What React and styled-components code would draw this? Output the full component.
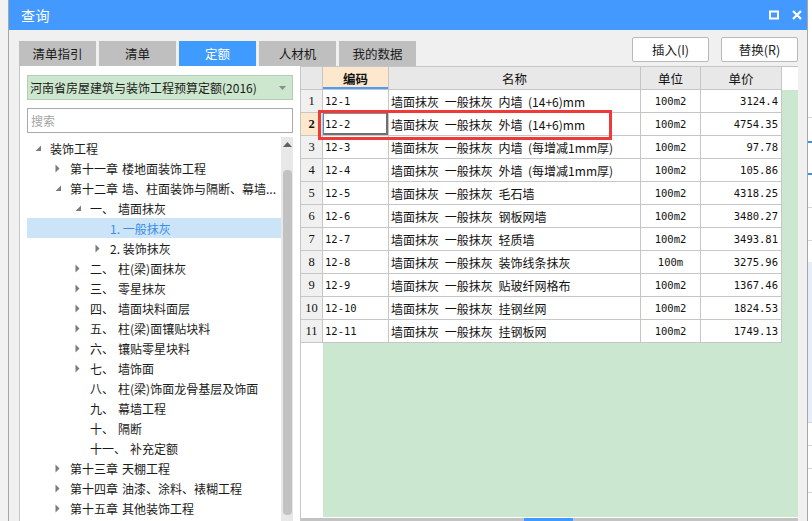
import React from 'react';
import styled, { createGlobalStyle } from 'styled-components';

const Global = createGlobalStyle`
  html, body { margin: 0; padding: 0; }
  body {
    width: 812px; height: 521px; overflow: hidden; background: #f2f2f2;
    font-family: "Noto Sans CJK SC", "Noto Sans", sans-serif; font-size: 12px; color: #1e1e1e;
  }
  * { box-sizing: border-box; }
`;

const Page = styled.div`
  display: flex; width: 812px; height: 521px; overflow: hidden;
`;
const Gutter = styled.div`
  width: 8px; flex: none; background: #f2f2f2;
`;
const Backdrop = styled.div`
  width: 4px; flex: none;
  background:
    linear-gradient(to bottom,
      #ffffff 0 117px, #d6d6d6 117px 118px, #ffffff 118px 141px, #3d8fe6 141px 143px,
      #ffffff 143px 173px, #3d8fe6 173px 175px, #ffffff 175px 207px, #d6d6d6 207px 208px,
      #ffffff 208px 240px, #d6d6d6 240px 241px, #ffffff 241px 262px, #e6eefa 262px 422px,
      #d6d6d6 422px 423px, #ffffff 423px 445px, #d6d6d6 445px 446px, #ffffff 446px 468px,
      #d6d6d6 468px 469px, #ffffff 469px 492px, #d6d6d6 492px 493px, #ffffff 493px);
`;
const Dialog = styled.div`
  width: 800px; flex: none; height: 521px; display: flex; flex-direction: column;
  border-left: 1px solid #a6a6a6; border-right: 1px solid #a6a6a6; background: #f0f0f0;
`;
const TitleBar = styled.div`
  height: 30px; flex: none; display: flex; align-items: center; justify-content: space-between;
  background: #4499ff; color: #ffffff; padding: 0 5px 0 12px; font-size: 14px;
`;
const TitleText = styled.span`
  letter-spacing: 0.5px;
`;
const TitleIcons = styled.div`
  display: flex; align-items: center; gap: 13px;
`;
const Body = styled.div`
  flex: 1; min-height: 0; display: flex; flex-direction: column; padding: 7px 9px 0 10px;
`;
const Toolbar = styled.div`
  height: 29px; flex: none; display: flex; justify-content: space-between; align-items: flex-end;
`;
const Tabs = styled.div`
  display: flex; gap: 3px; align-items: flex-end;
`;
const Tab = styled.div`
  width: 77px; height: 25px; display: flex; align-items: center; justify-content: center;
  background: ${p => (p.$active ? '#3f9bff' : '#bfbfbf')};
  color: ${p => (p.$active ? '#ffffff' : '#1a1a1a')};
  font-size: 12.5px;
`;
const Buttons = styled.div`
  align-self: flex-start; display: flex; gap: 12px;
`;
const Button = styled.div`
  width: 77px; height: 25px; display: flex; align-items: center; justify-content: center;
  background: #ffffff; border: 1px solid #b9b9b9; border-radius: 2px; font-size: 12.5px; color: #222;
`;
const Content = styled.div`
  flex: 1; min-height: 0; display: flex;
`;
const LeftPanel = styled.div`
  width: 282px; flex: none; display: flex; flex-direction: column; background: #ffffff;
  border-left: 1px solid #c6c6c6; border-right: 1px solid #c6c6c6; padding: 9px 7px 0 7px;
`;
const Dropdown = styled.div`
  height: 25px; flex: none; display: flex; align-items: center; justify-content: space-between;
  background: #cde7ce; border: 1px solid #b3ceb3; padding: 0 6px 0 2px; font-size: 12px; color: #1a1a1a;
`;
const Search = styled.div`
  height: 25px; flex: none; margin-top: 8px; display: flex; align-items: center;
  border: 1px solid #a9a9a9; padding-left: 3px; color: #a3a3a3; font-size: 12px;
`;
const TreeArea = styled.div`
  flex: 1; min-height: 0; margin-top: 4px; display: flex;
`;
const TreeList = styled.div`
  flex: 1; min-width: 0; padding-top: 1px;
`;
const TreeRow = styled.div`
  height: 20px; display: flex; align-items: center; white-space: nowrap;
  padding-left: ${p => 8 + p.$level * 20}px;
  background: ${p => (p.$selected ? '#cce4f7' : 'transparent')};
  color: ${p => (p.$selected ? '#3a8ee6' : '#1a1a1a')};
`;
const Toggle = styled.span`
  width: 15px; flex: none; display: flex; align-items: center;
`;
const Label = styled.span`
  white-space: nowrap;
`;
const Num = styled.span`
  margin-right: 4px;
`;
const VScroll = styled.div`
  width: 12px; flex: none; background: #e8e8e8; display: flex; flex-direction: column; align-items: center;
`;
const ScrollArrow = styled.div`
  height: 14px; flex: none; display: flex; align-items: center; justify-content: center;
`;
const ScrollThumb = styled.div`
  width: 9px; height: 345px; flex: none; margin-top: 19px; border-radius: 4px; background: #c2c2c2;
`;
const RightPanel = styled.div`
  flex: 1; min-width: 0; position: relative; display: flex; flex-direction: column;
  background: #ffffff; border-top: 1px solid #c6c6c6;
`;
const Row = styled.div`
  display: grid; grid-template-columns: 22px 66px 252px 60px 81px 1fr; height: 23px; flex: none;
`;
const Cell = styled.div`
  display: flex; align-items: center; overflow: hidden; white-space: pre;
  border-right: 1px solid #c6c6c6; border-bottom: 1px solid #c6c6c6;
  justify-content: ${p => (p.$align === 'center' ? 'center' : p.$align === 'right' ? 'flex-end' : 'flex-start')};
  padding: ${p => (p.$align === 'right' ? '0 3px 0 0' : p.$align === 'center' ? '0' : '0 0 0 2px')};
  background: #ffffff;
  font-family: ${p => (p.$mono ? '"DejaVu Sans Mono", "Liberation Mono", monospace' : '"Noto Sans CJK SC", sans-serif')};
  font-size: ${p => (p.$mono ? '10.5px' : '12px')};
  word-spacing: ${p => (p.$mono ? '0' : '3px')};
  color: #111;
  box-shadow: ${p => (p.$focused ? 'inset 1px 0 0 #3a8ee6, inset -2px -2px 0 #707070, inset 0 1px 0 #8a8a8a' : 'none')};
`;
const HeadCell = styled(Cell)`
  justify-content: center; padding: 0;
  background: ${p => (p.$hot ? '#fde7cd' : '#e8e8e8')};
  font-weight: ${p => (p.$hot ? 700 : 400)};
  font-size: 12.5px;
  box-shadow: ${p => (p.$hot ? 'inset 0 -2px 0 #4a9cfd' : 'none')};
`;
const RowNum = styled(Cell)`
  justify-content: center; padding: 0;
  background: ${p => (p.$active ? '#fde7cd' : '#f0f0f0')};
  font-family: "Liberation Serif", "DejaVu Serif", serif;
  font-weight: ${p => (p.$active ? 700 : 400)};
  font-size: 12.5px;
`;
const Blank = styled.div`
  background: ${p => (p.$green ? '#cce7d0' : '#ffffff')};
`;
const Filler = styled.div`
  flex: 1; min-height: 0; display: flex;
`;
const FillerIndex = styled.div`
  width: 22px; flex: none; background: #ffffff;
`;
const FillerGreen = styled.div`
  flex: 1; background: #cce7d0; margin-bottom: 1px;
`;
const HScroll = styled.div`
  height: 3px; flex: none; background: #c3c3c3; display: flex;
`;
const HThumb = styled.div`
  margin-left: 223px; width: 49px; background: #3f9bff;
`;
const Highlight = styled.div`
  position: absolute; left: 17px; top: 43px; width: 294px; height: 30px;
  border: 3px solid #ef3a3a; pointer-events: none;
`;

const OpenArrow = () => (
  <svg width="7" height="7" viewBox="0 0 7 7"><path d="M6 0.5 L6 6 L0.5 6 Z" fill="#7b7b7b" /></svg>
);
const ClosedArrow = () => (
  <svg width="5" height="9" viewBox="0 0 5 9"><path d="M0.5 0.5 L4.5 4.5 L0.5 8.5 Z" fill="#7b7b7b" /></svg>
);
const DropArrow = () => (
  <svg width="7" height="4" viewBox="0 0 7 4"><path d="M0 0 L7 0 L3.5 4 Z" fill="#8c8c8c" /></svg>
);
const UpArrow = () => (
  <svg width="9" height="5" viewBox="0 0 9 5"><path d="M0 5 L4.5 0 L9 5 Z" fill="#606060" /></svg>
);
const MaxIcon = () => (
  <svg width="10" height="10" viewBox="0 0 10 10"><rect x="1" y="1.5" width="8" height="7" fill="none" stroke="#fff" strokeWidth="2" /></svg>
);
const CloseIcon = () => (
  <svg width="10" height="10" viewBox="0 0 10 10"><path d="M1 1 L9 9 M9 1 L1 9" stroke="#fff" strokeWidth="2.2" /></svg>
);

const tree = [
  { lvl: 0, arrow: 'open', num: '', text: '装饰工程' },
  { lvl: 1, arrow: 'closed', num: '第十一章', text: '楼地面装饰工程' },
  { lvl: 1, arrow: 'open', num: '第十二章', text: '墙、柱面装饰与隔断、幕墙...' },
  { lvl: 2, arrow: 'open', num: '一、', text: '墙面抹灰' },
  { lvl: 3, arrow: null, num: '', text: '1. 一般抹灰', selected: true },
  { lvl: 3, arrow: 'closed', num: '', text: '2. 装饰抹灰' },
  { lvl: 2, arrow: 'closed', num: '二、', text: '柱(梁)面抹灰' },
  { lvl: 2, arrow: 'closed', num: '三、', text: '零星抹灰' },
  { lvl: 2, arrow: 'closed', num: '四、', text: '墙面块料面层' },
  { lvl: 2, arrow: 'closed', num: '五、', text: '柱(梁)面镶贴块料' },
  { lvl: 2, arrow: 'closed', num: '六、', text: '镶贴零星块料' },
  { lvl: 2, arrow: 'closed', num: '七、', text: '墙饰面' },
  { lvl: 2, arrow: null, num: '八、', text: '柱(梁)饰面龙骨基层及饰面' },
  { lvl: 2, arrow: null, num: '九、', text: '幕墙工程' },
  { lvl: 2, arrow: null, num: '十、', text: '隔断' },
  { lvl: 2, arrow: null, num: '十一、', text: '补充定额' },
  { lvl: 1, arrow: 'closed', num: '第十三章', text: '天棚工程' },
  { lvl: 1, arrow: 'closed', num: '第十四章', text: '油漆、涂料、裱糊工程' },
  { lvl: 1, arrow: 'closed', num: '第十五章', text: '其他装饰工程' },
];

const rows = [
  ['12-1', '墙面抹灰 一般抹灰 内墙 (14+6)mm', '100m2', '3124.4'],
  ['12-2', '墙面抹灰 一般抹灰 外墙 (14+6)mm', '100m2', '4754.35'],
  ['12-3', '墙面抹灰 一般抹灰 内墙 (每增减1mm厚)', '100m2', '97.78'],
  ['12-4', '墙面抹灰 一般抹灰 外墙 (每增减1mm厚)', '100m2', '105.86'],
  ['12-5', '墙面抹灰 一般抹灰 毛石墙', '100m2', '4318.25'],
  ['12-6', '墙面抹灰 一般抹灰 钢板网墙', '100m2', '3480.27'],
  ['12-7', '墙面抹灰 一般抹灰 轻质墙', '100m2', '3493.81'],
  ['12-8', '墙面抹灰 一般抹灰 装饰线条抹灰', '100m', '3275.96'],
  ['12-9', '墙面抹灰 一般抹灰 贴玻纤网格布', '100m2', '1367.46'],
  ['12-10', '墙面抹灰 一般抹灰 挂钢丝网', '100m2', '1824.53'],
  ['12-11', '墙面抹灰 一般抹灰 挂钢板网', '100m2', '1749.13'],
];

export default function App() {
  return (
    <Page>
      <Global />
      <Gutter />
      <Dialog>
        <TitleBar>
          <TitleText>查询</TitleText>
          <TitleIcons>
            <MaxIcon />
            <CloseIcon />
          </TitleIcons>
        </TitleBar>
        <Body>
          <Toolbar>
            <Tabs>
              <Tab>清单指引</Tab>
              <Tab>清单</Tab>
              <Tab $active>定额</Tab>
              <Tab>人材机</Tab>
              <Tab>我的数据</Tab>
            </Tabs>
            <Buttons>
              <Button>插入(I)</Button>
              <Button>替换(R)</Button>
            </Buttons>
          </Toolbar>
          <Content>
            <LeftPanel>
              <Dropdown>
                <span>河南省房屋建筑与装饰工程预算定额(2016)</span>
                <DropArrow />
              </Dropdown>
              <Search>搜索</Search>
              <TreeArea>
                <TreeList>
                  {tree.map((t, i) => (
                    <TreeRow key={i} $level={t.lvl} $selected={t.selected}>
                      <Toggle>
                        {t.arrow === 'open' && <OpenArrow />}
                        {t.arrow === 'closed' && <ClosedArrow />}
                      </Toggle>
                      <Label>
                        {t.num && <Num>{t.num}</Num>}
                        {t.text}
                      </Label>
                    </TreeRow>
                  ))}
                </TreeList>
                <VScroll>
                  <ScrollArrow><UpArrow /></ScrollArrow>
                  <ScrollThumb />
                </VScroll>
              </TreeArea>
            </LeftPanel>
            <RightPanel>
              <Row>
                <HeadCell />
                <HeadCell $hot>编码</HeadCell>
                <HeadCell>名称</HeadCell>
                <HeadCell>单位</HeadCell>
                <HeadCell>单价</HeadCell>
                <Blank />
              </Row>
              {rows.map((r, i) => (
                <Row key={i}>
                  <RowNum $active={i === 1}>{i + 1}</RowNum>
                  <Cell $mono $focused={i === 1}>{r[0]}</Cell>
                  <Cell>{r[1]}</Cell>
                  <Cell $mono $align="center">{r[2]}</Cell>
                  <Cell $mono $align="right">{r[3]}</Cell>
                  <Blank $green />
                </Row>
              ))}
              <Filler>
                <FillerIndex />
                <FillerGreen />
              </Filler>
              <HScroll><HThumb /></HScroll>
              <Highlight />
            </RightPanel>
          </Content>
        </Body>
      </Dialog>
      <Backdrop />
    </Page>
  );
}
